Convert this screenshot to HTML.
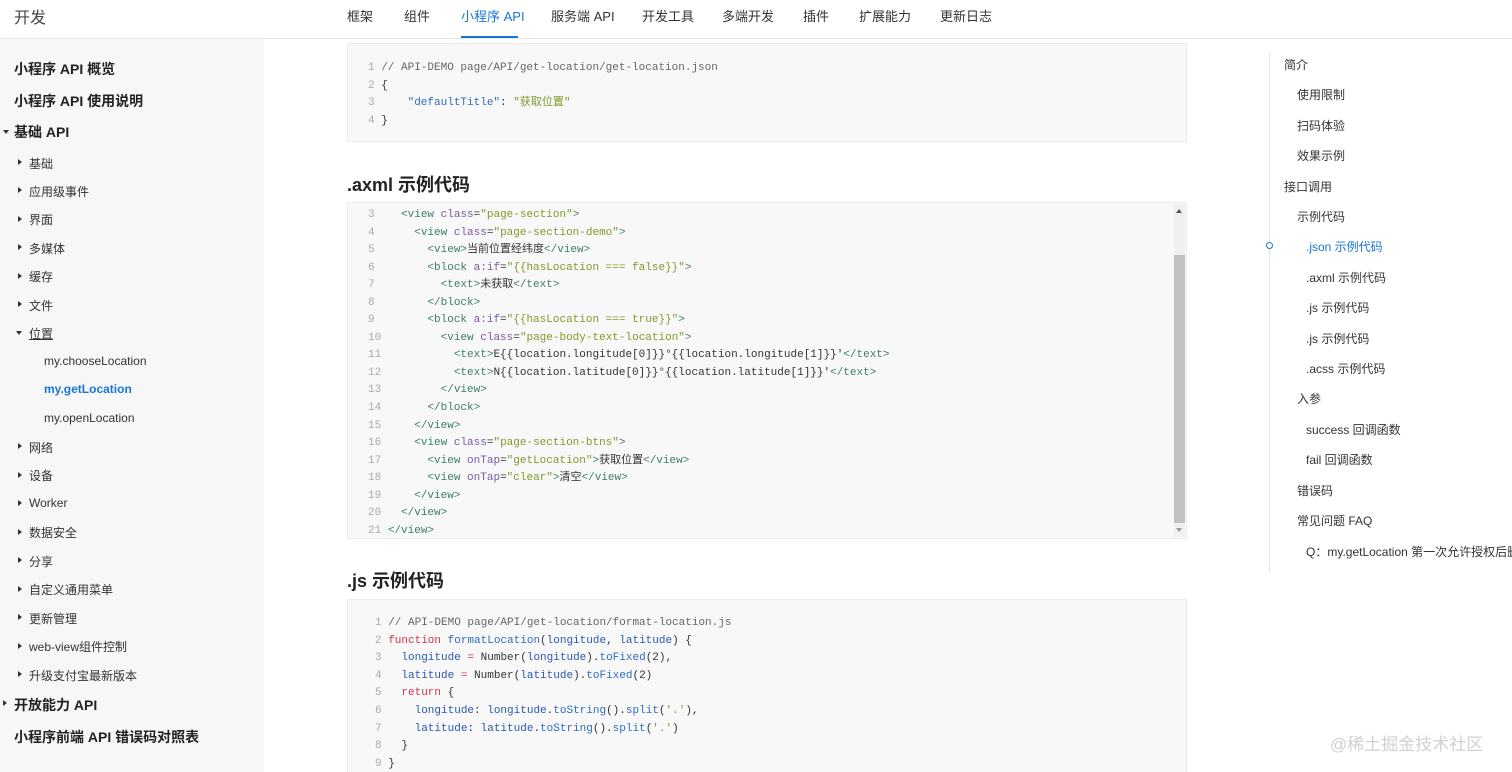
<!DOCTYPE html>
<html><head><meta charset="utf-8"><style>
*{margin:0;padding:0;box-sizing:border-box}
html,body{width:1512px;height:772px;overflow:hidden}
body{background:#fff;font-family:"Liberation Sans","Noto Sans CJK SC",sans-serif;color:#333;position:relative}
.a{position:absolute;white-space:nowrap}
.hdr{position:absolute;left:0;top:0;width:1512px;height:39px;border-bottom:1px solid #e8e8e8;background:#fff}
.nav{font-size:13px;color:#333;top:6px}
.side{position:absolute;left:0;top:39px;width:264px;height:733px;background:#f7f7f7}
.l1{font-size:14px;font-weight:bold;color:#222;left:14px}
.l2{font-size:12px;color:#333;left:29px}
.l3{font-size:12px;color:#333;left:44px}
.tri{position:absolute;width:0;height:0}
.td{border-left:3px solid transparent;border-right:3px solid transparent;border-top:4px solid #333}
.tr{border-top:3px solid transparent;border-bottom:3px solid transparent;border-left:4px solid #333}
.blk{position:absolute;left:347px;width:840px;background:#f8f8f8;border:1px solid #ececec}
.code{font-family:"Liberation Mono",monospace;font-size:11px;color:#333}
.n{color:#aaa}
.h2{font-size:18px;font-weight:bold;color:#222;left:347px}
.toc{font-size:12px;color:#333}
.tg{color:#3a7f66}.at{color:#7a5aa0}.st{color:#7f9a2a}
.kw{color:#d0344c}.fn{color:#2f6cc0}.v{color:#2a58b0}.cm{color:#666}
</style></head><body>
<div class="hdr"></div>
<div class="a" style="left:14px;top:4px;font-size:16px;color:#444">开发</div>
<div class="a nav" style="left:347px">框架</div>
<div class="a nav" style="left:404px">组件</div>
<div class="a nav" style="left:461px;color:#1677d2">小程序 API</div>
<div style="position:absolute;left:461px;top:36px;width:57px;height:2px;background:#1677d2"></div>
<div class="a nav" style="left:551px">服务端 API</div>
<div class="a nav" style="left:642px">开发工具</div>
<div class="a nav" style="left:722px">多端开发</div>
<div class="a nav" style="left:803px">插件</div>
<div class="a nav" style="left:859px">扩展能力</div>
<div class="a nav" style="left:940px">更新日志</div>

<div class="side"></div>
<div class="a l1" style="top:59px">小程序 API 概览</div>
<div class="a l1" style="top:91px">小程序 API 使用说明</div>
<div class="tri td" style="left:3px;top:130px"></div>
<div class="a l1" style="top:122px">基础 API</div>
<div class="tri tr" style="left:18px;top:159px"></div><div class="a l2" style="top:155px">基础</div>
<div class="tri tr" style="left:18px;top:187px"></div><div class="a l2" style="top:183px">应用级事件</div>
<div class="tri tr" style="left:18px;top:216px"></div><div class="a l2" style="top:211px">界面</div>
<div class="tri tr" style="left:18px;top:244px"></div><div class="a l2" style="top:240px">多媒体</div>
<div class="tri tr" style="left:18px;top:273px"></div><div class="a l2" style="top:268px">缓存</div>
<div class="tri tr" style="left:18px;top:301px"></div><div class="a l2" style="top:297px">文件</div>
<div class="tri td" style="left:16px;top:331px"></div><div class="a l2" style="top:325px;text-decoration:underline">位置</div>
<div class="a l3" style="top:354px">my.chooseLocation</div>
<div class="a l3" style="top:382px;color:#1677d2;font-weight:bold">my.getLocation</div>
<div class="a l3" style="top:411px">my.openLocation</div>
<div class="tri tr" style="left:18px;top:443px"></div><div class="a l2" style="top:439px">网络</div>
<div class="tri tr" style="left:18px;top:472px"></div><div class="a l2" style="top:467px">设备</div>
<div class="tri tr" style="left:18px;top:500px"></div><div class="a l2" style="top:496px">Worker</div>
<div class="tri tr" style="left:18px;top:529px"></div><div class="a l2" style="top:524px">数据安全</div>
<div class="tri tr" style="left:18px;top:557px"></div><div class="a l2" style="top:553px">分享</div>
<div class="tri tr" style="left:18px;top:586px"></div><div class="a l2" style="top:581px">自定义通用菜单</div>
<div class="tri tr" style="left:18px;top:614px"></div><div class="a l2" style="top:610px">更新管理</div>
<div class="tri tr" style="left:18px;top:643px"></div><div class="a l2" style="top:638px">web-view组件控制</div>
<div class="tri tr" style="left:18px;top:671px"></div><div class="a l2" style="top:667px">升级支付宝最新版本</div>
<div class="tri tr" style="left:3px;top:700px"></div>
<div class="a l1" style="top:695px">开放能力 API</div>
<div class="a l1" style="top:727px">小程序前端 API 错误码对照表</div>

<div class="blk" style="top:43px;height:99px"></div>
<div class="a code" style="left:368px;top:60px;line-height:17.6px;white-space:pre"><span class="n">1 </span><span class="cm">// API-DEMO page/API/get-location/get-location.json</span>
<span class="n">2 </span>{
<span class="n">3 </span>    <span class="fn">"defaultTitle"</span>: <span class="st">"获取位置"</span>
<span class="n">4 </span>}</div>

<div class="a h2" style="top:171px">.axml 示例代码</div>
<div class="blk" style="top:202px;height:337px;overflow:hidden">
<div style="position:absolute;right:1px;top:1px;width:11px;height:333px;background:#f0f0f0"></div>
<div style="position:absolute;right:1px;top:52px;width:11px;height:268px;background:#c1c1c1"></div>
<div style="position:absolute;right:4px;top:6px;width:0;height:0;border-left:3px solid transparent;border-right:3px solid transparent;border-bottom:4px solid #555"></div>
<div style="position:absolute;right:4px;bottom:6px;width:0;height:0;border-left:3px solid transparent;border-right:3px solid transparent;border-top:4px solid #999"></div>
</div>
<div class="a code" style="left:368px;top:207px;line-height:17.55px;white-space:pre"><span class="n">3  </span>  <span class="tg">&lt;view</span> <span class="at">class</span>=<span class="st">"page-section"</span><span class="tg">&gt;</span>
<span class="n">4  </span>    <span class="tg">&lt;view</span> <span class="at">class</span>=<span class="st">"page-section-demo"</span><span class="tg">&gt;</span>
<span class="n">5  </span>      <span class="tg">&lt;view&gt;</span>当前位置经纬度<span class="tg">&lt;/view&gt;</span>
<span class="n">6  </span>      <span class="tg">&lt;block</span> <span class="at">a:if</span>=<span class="st">"{{hasLocation === false}}"</span><span class="tg">&gt;</span>
<span class="n">7  </span>        <span class="tg">&lt;text&gt;</span>未获取<span class="tg">&lt;/text&gt;</span>
<span class="n">8  </span>      <span class="tg">&lt;/block&gt;</span>
<span class="n">9  </span>      <span class="tg">&lt;block</span> <span class="at">a:if</span>=<span class="st">"{{hasLocation === true}}"</span><span class="tg">&gt;</span>
<span class="n">10 </span>        <span class="tg">&lt;view</span> <span class="at">class</span>=<span class="st">"page-body-text-location"</span><span class="tg">&gt;</span>
<span class="n">11 </span>          <span class="tg">&lt;text&gt;</span>E{{location.longitude[0]}}°{{location.longitude[1]}}′<span class="tg">&lt;/text&gt;</span>
<span class="n">12 </span>          <span class="tg">&lt;text&gt;</span>N{{location.latitude[0]}}°{{location.latitude[1]}}′<span class="tg">&lt;/text&gt;</span>
<span class="n">13 </span>        <span class="tg">&lt;/view&gt;</span>
<span class="n">14 </span>      <span class="tg">&lt;/block&gt;</span>
<span class="n">15 </span>    <span class="tg">&lt;/view&gt;</span>
<span class="n">16 </span>    <span class="tg">&lt;view</span> <span class="at">class</span>=<span class="st">"page-section-btns"</span><span class="tg">&gt;</span>
<span class="n">17 </span>      <span class="tg">&lt;view</span> <span class="at">onTap</span>=<span class="st">"getLocation"</span><span class="tg">&gt;</span>获取位置<span class="tg">&lt;/view&gt;</span>
<span class="n">18 </span>      <span class="tg">&lt;view</span> <span class="at">onTap</span>=<span class="st">"clear"</span><span class="tg">&gt;</span>清空<span class="tg">&lt;/view&gt;</span>
<span class="n">19 </span>    <span class="tg">&lt;/view&gt;</span>
<span class="n">20 </span>  <span class="tg">&lt;/view&gt;</span>
<span class="n">21 </span><span class="tg">&lt;/view&gt;</span></div>

<div class="a h2" style="top:567px">.js 示例代码</div>
<div class="blk" style="top:599px;height:190px"></div>
<div class="a code" style="left:375px;top:615px;line-height:17.6px;white-space:pre"><span class="n">1 </span><span class="cm">// API-DEMO page/API/get-location/format-location.js</span>
<span class="n">2 </span><span class="kw">function</span> <span class="fn">formatLocation</span>(<span class="v">longitude</span>, <span class="v">latitude</span>) {
<span class="n">3 </span>  <span class="v">longitude</span> <span class="kw">=</span> Number(<span class="v">longitude</span>).<span class="fn">toFixed</span>(2),
<span class="n">4 </span>  <span class="v">latitude</span> <span class="kw">=</span> Number(<span class="v">latitude</span>).<span class="fn">toFixed</span>(2)
<span class="n">5 </span>  <span class="kw">return</span> {
<span class="n">6 </span>    <span class="v">longitude</span>: <span class="v">longitude</span>.<span class="fn">toString</span>().<span class="fn">split</span>(<span class="st">'.'</span>),
<span class="n">7 </span>    <span class="v">latitude</span>: <span class="v">latitude</span>.<span class="fn">toString</span>().<span class="fn">split</span>(<span class="st">'.'</span>)
<span class="n">8 </span>  }
<span class="n">9 </span>}</div>

<div style="position:absolute;left:1269px;top:53px;width:1px;height:519px;background:#e6e6e6"></div>
<div style="position:absolute;left:1266px;top:242px;width:7px;height:7px;border:1.5px solid #1677d2;border-radius:50%;background:#fff"></div>
<div class="a toc" style="left:1284px;top:56px">简介</div>
<div class="a toc" style="left:1297px;top:86px">使用限制</div>
<div class="a toc" style="left:1297px;top:117px">扫码体验</div>
<div class="a toc" style="left:1297px;top:147px">效果示例</div>
<div class="a toc" style="left:1284px;top:178px">接口调用</div>
<div class="a toc" style="left:1297px;top:208px">示例代码</div>
<div class="a toc" style="left:1306px;top:238px;color:#1677d2">.json 示例代码</div>
<div class="a toc" style="left:1306px;top:269px">.axml 示例代码</div>
<div class="a toc" style="left:1306px;top:299px">.js 示例代码</div>
<div class="a toc" style="left:1306px;top:330px">.js 示例代码</div>
<div class="a toc" style="left:1306px;top:360px">.acss 示例代码</div>
<div class="a toc" style="left:1297px;top:390px">入参</div>
<div class="a toc" style="left:1306px;top:421px">success 回调函数</div>
<div class="a toc" style="left:1306px;top:451px">fail 回调函数</div>
<div class="a toc" style="left:1297px;top:482px">错误码</div>
<div class="a toc" style="left:1297px;top:512px">常见问题 FAQ</div>
<div class="a toc" style="left:1306px;top:543px">Q：my.getLocation 第一次允许授权后删</div>
<div class="a" style="left:1330px;top:730px;font-size:17px;color:#d0d0d0">@稀土掘金技术社区</div>
</body></html>
